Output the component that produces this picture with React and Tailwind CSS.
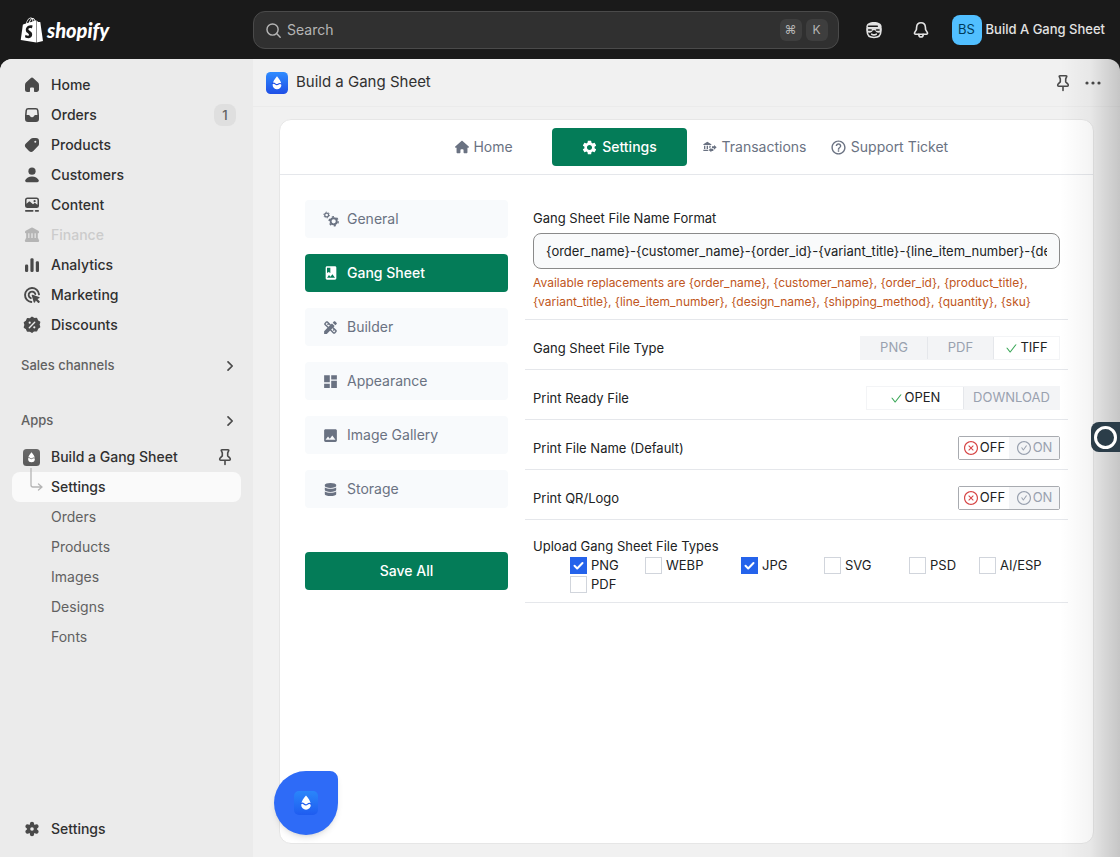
import React, { useState } from "react";
import { AiOutlineCheck, AiOutlineCheckCircle, AiOutlineCloseCircle } from "react-icons/ai";
import { FaDatabase, FaShopify } from "react-icons/fa";
import { FaHouse } from "react-icons/fa6";
import { MdDashboard, MdDesignServices, MdHelpOutline, MdImage, MdSettings } from "react-icons/md";

const Icon = ({ children, className = "size-5" }) => (
  <svg viewBox="0 0 20 20" fill="currentColor" className={`shrink-0 ${className}`} aria-hidden="true">
    {children}
  </svg>
);

const HomeIcon = () => (
  <Icon>
    <path d="M8.6 3.3a2 2 0 0 1 2.8 0l4.6 4.3c.6.6 1 1.4 1 2.3v4.6c0 1.4-1.1 2.5-2.5 2.5h-1.700a.8.8 0 0 1-.8-.8v-2.700a1 1 0 0 0-1-1h-2a1 1 0 0 0-1 1v2.700a.8.8 0 0 1-.8.8h-1.700A2.500 2.500 0 0 1 3 14.500V9.900c0-.9.400-1.700 1-2.300z" />
  </Icon>
);

const OrdersIcon = () => (
  <Icon>
    <path
      fillRule="evenodd"
      d="M6.200 3h7.600a2.700 2.700 0 0 1 2.700 2.300l.5 5v3.700a3 3 0 0 1-3 3H6a3 3 0 0 1-3-3v-3.700l.5-5A2.700 2.700 0 0 1 6.200 3zm.1 1.500c-.7 0-1.200.5-1.300 1.100L4.600 10h1.900c.7 0 1.200.4 1.500 1 .4.800 1.100 1.200 2 1.200s1.600-.4 2-1.200c.3-.6.8-1 1.500-1h1.900L15 5.600c-.1-.6-.6-1.100-1.300-1.100z"
    />
  </Icon>
);

const ProductsIcon = () => (
  <Icon>
    <path
      fillRule="evenodd"
      d="M11.300 3H14a3 3 0 0 1 3 3v2.900c0 .9-.3 1.600-.9 2.200l-4.800 4.900a3 3 0 0 1-4.300 0l-3.100-3.200a3 3 0 0 1 0-4.200l5-4.800A3.400 3.400 0 0 1 11.300 3zM13.300 7.700a1 1 0 1 0 0-2 1 1 0 0 0 0 2z"
    />
  </Icon>
);

const CustomersIcon = () => (
  <Icon>
    <circle cx="10" cy="6.200" r="3.600" />
    <path d="M10 11.400c3.200 0 5.600 1.500 6.700 3.700.5 1-.3 2.100-1.500 2.100H4.800c-1.200 0-2-1.100-1.500-2.100 1.100-2.200 3.500-3.700 6.700-3.700z" />
  </Icon>
);

const ContentIcon = () => (
  <Icon>
    <path
      fillRule="evenodd"
      d="M5.500 2.500h9A2.500 2.500 0 0 1 17 5v5.500a2.500 2.500 0 0 1-2.500 2.500h-9A2.500 2.500 0 0 1 3 10.500V5a2.500 2.500 0 0 1 2.500-2.500zM4.500 8.700l2-1.800c.6-.5 1.300-.5 1.900 0l2.600 2.300 1-.8c.5-.4 1.200-.4 1.700 0l1.800 1.300V5.200c0-.7-.5-1.200-1.200-1.200H5.700c-.7 0-1.200.5-1.200 1.200z"
    />
    <circle cx="12.600" cy="6.200" r="1.100" />
    <rect x="3" y="15" width="8.500" height="1.700" rx=".8" />
    <rect x="12.800" y="15" width="4.200" height="1.700" rx=".8" />
  </Icon>
);

const FinanceIcon = () => (
  <Icon>
    <path d="M9.200 2.700a1.700 1.700 0 0 1 1.600 0l5.500 3.100c.5.300.7.7.7 1.200v.3c0 .6-.4 1-1 1H4c-.6 0-1-.4-1-1V7c0-.5.300-.9.700-1.200z" />
    <path d="M4.200 8h2.100v5.500H4.200zM7.400 8h2v5.500h-2zM10.600 8h2v5.500h-2zM13.700 8h2.100v5.500h-2.100z" />
    <path d="M4 13h12l1 2.200v1c0 .5-.3.800-.8.800H3.800a.8.8 0 0 1-.8-.8v-1z" />
  </Icon>
);

const AnalyticsIcon = () => (
  <Icon>
    <rect x="3" y="9.500" width="3.200" height="7.500" rx="1.300" />
    <rect x="8.400" y="3.200" width="3.200" height="13.800" rx="1.300" />
    <rect x="13.800" y="6.200" width="3.200" height="10.800" rx="1.300" />
  </Icon>
);

const MarketingIcon = () => (
  <Icon>
    <g fill="none" stroke="currentColor" strokeWidth="1.900" strokeLinecap="round">
      <path d="M9.300 17A7 7 0 1 1 17 9.300" />
      <path d="M8.800 13.200A3.400 3.400 0 1 1 13.300 9" />
    </g>
    <path d="M9.700 10.600c-.2-.6.300-1.100.9-.9l6.500 2.200c.7.200.7 1.200 0 1.400l-1.700.7 2.200 2.200c.3.300.3.800 0 1.100l-.5.500c-.3.300-.8.300-1.100 0l-2.200-2.200-.7 1.700c-.3.700-1.200.6-1.400 0z" />
  </Icon>
);

const DiscountsIcon = () => (
  <Icon>
    <path
      d="M10 2.300l2.100 1.400 2.500-.2.900 2.300 2.100 1.400-.7 2.400.7 2.400-2.100 1.400-.9 2.300-2.500-.2L10 17.200l-2.100-1.400-2.500.2-.9-2.300L2.400 12.300l.7-2.400-.7-2.400 2.100-1.400.9-2.300 2.500.2z"
      stroke="currentColor"
      strokeWidth="1.400"
      strokeLinejoin="round"
    />
    <path d="M7.300 12.700l5.400-5.400" stroke="#ebebeb" strokeWidth="1.400" strokeLinecap="round" />
    <circle cx="7.700" cy="7.700" r="1.100" fill="#ebebeb" />
    <circle cx="12.300" cy="12.300" r="1.100" fill="#ebebeb" />
  </Icon>
);

const SettingsIcon = () => (
  <Icon>
    <g stroke="currentColor" strokeWidth="4.200" strokeLinecap="round">
      <path d="M10 4.800v10.400M5.500 7.400l9 5.200M14.500 7.400l-9 5.200" />
    </g>
    <circle cx="10" cy="10" r="5" />
    <circle cx="10" cy="10" r="1.800" fill="#ebebeb" />
  </Icon>
);

const PinIcon = () => (
  <Icon>
    <path
      d="M7 2.700h6c.6 0 .9.500.7 1l-1 2.200v3l2 1.900c.4.400.6.900.6 1.400 0 .6-.4 1-1 1H5.700c-.6 0-1-.4-1-1 0-.5.200-1 .6-1.400l2-1.900v-3l-1-2.200c-.2-.5.100-1 .7-1zM10 13.500v4"
      fill="none"
      stroke="currentColor"
      strokeWidth="1.600"
      strokeLinecap="round"
      strokeLinejoin="round"
    />
  </Icon>
);

const ChevronIcon = () => (
  <Icon>
    <path d="M8 6.800l4.200 4.200L8 15.200" fill="none" stroke="#4a4a4a" strokeWidth="1.700" strokeLinecap="round" strokeLinejoin="round" />
  </Icon>
);

const BellIcon = () => (
  <Icon>
    <g fill="none" stroke="currentColor" strokeWidth="1.600" strokeLinejoin="round" strokeLinecap="round">
      <path d="M10 2.800c-2.500 0-4.200 1.900-4.400 4.300l-.2 2.500-1.800 3c-.4.800.1 1.600.9 1.600h11c.8 0 1.300-.8.900-1.600l-1.800-3-.2-2.500C14.200 4.700 12.500 2.800 10 2.800z" />
      <path d="M7.800 14.400c0 1.600.9 2.600 2.200 2.600s2.200-1 2.200-2.600" />
    </g>
  </Icon>
);

const SidekickIcon = () => (
  <Icon>
    <path d="M2.400 8.700V6.500C2.600 3.500 5.700 2 10 2s7.400 1.500 7.600 4.500v2.200z" />
    <g fill="none" stroke="currentColor" strokeWidth="1.600" strokeLinecap="round">
      <path d="M3.200 9v2.500c0 3.700 2.700 6 6.800 6s6.800-2.300 6.800-6V9" />
      <path d="M7.700 14.200c1.400.8 3.200.8 4.600 0" />
    </g>
    <path d="M2.500 8.200h15v1.600c0 1.800-1.300 2.900-3 2.900-1.800 0-3-1-3.300-2.400H8.800c-.3 1.400-1.500 2.400-3.300 2.400-1.700 0-3-1.100-3-2.900z" />
    <path d="M4.500 6.200h8.800M4.600 9.900h2.600M12.500 9.900h2.600" stroke="#1a1a1a" strokeWidth="1.500" strokeLinecap="round" />
  </Icon>
);

const BankTransferIcon = () => (
  <svg viewBox="0 0 24 24" fill="currentColor" className="size-4" aria-hidden="true">
    <path d="M15 14V11H18V9L22 12.500L18 16V14H15M14 7.700V9H2V7.700L8 4L14 7.700M7 10H9V15H7V10M3 10H5V15H3V10M13 10V12.500L11 14.300V10H13M9.100 16L8.500 16.500L10.200 18H2V16H9.100M17 15V18H14V20L10 16.500L14 13V15H17Z" />
  </svg>
);

const GearsIcon = () => (
  <svg viewBox="0 0 24 24" fill="none" stroke="currentColor" className="size-4 shrink-0" aria-hidden="true">
    <circle cx="5.500" cy="6" r="2.900" strokeWidth="1.900" />
    <circle cx="5.500" cy="6" r="4.300" strokeWidth="1.500" strokeDasharray="1.900 2.600" />
    <circle cx="16" cy="15.500" r="4.600" strokeWidth="2.800" />
    <circle cx="16" cy="15.500" r="6.800" strokeWidth="2.200" strokeDasharray="3.200 3.920" />
  </svg>
);

const AlbumIcon = () => (
  <svg viewBox="0 0 24 24" fill="currentColor" className="size-4 shrink-0" aria-hidden="true">
    <path d="M18 2H6c-1.100 0-2 .9-2 2v16c0 1.100.9 2 2 2h12c1.100 0 2-.9 2-2V4c0-1.100-.9-2-2-2zM6 4h5v8l-2.500-1.500L6 12V4zm0 15l3-3.860 2.140 2.580 3-3.860L18 19H6z" />
  </svg>
);

// Drop with a wavy cut, used for every size of the app logo
const DropLogo = ({ className, from, to, id }) => (
  <svg viewBox="0 0 24 24" className={`shrink-0 ${className}`} aria-hidden="true">
    <defs>
      <linearGradient id={id} x1="0" y1="0" x2="0" y2="1">
        <stop stopColor={from} />
        <stop offset="1" stopColor={to} />
      </linearGradient>
    </defs>
    <rect width="24" height="24" rx="5" fill={`url(#${id})`} />
    <path d="M12 4.500c2.200 2.700 4.800 5.800 4.800 9.300a4.800 5 0 0 1-9.600 0c0-3.500 2.600-6.600 4.800-9.300z" fill="#fff" />
    <path d="M6.500 13c1.400-1.400 2.500-.9 3.500 0s2.600.9 3.600.1 2.600-.7 3.900.4" fill="none" stroke={to} strokeWidth="1.200" />
  </svg>
);

const mainLinks = [
  { label: "Home", icon: HomeIcon },
  { label: "Orders", icon: OrdersIcon, badge: 1 },
  { label: "Products", icon: ProductsIcon },
  { label: "Customers", icon: CustomersIcon },
  { label: "Content", icon: ContentIcon },
  { label: "Finance", icon: FinanceIcon, disabled: true },
  { label: "Analytics", icon: AnalyticsIcon },
  { label: "Marketing", icon: MarketingIcon },
  { label: "Discounts", icon: DiscountsIcon },
];

const appLinks = ["Settings", "Orders", "Products", "Images", "Designs", "Fonts"];

const tabs = [
  { label: "Home", icon: <FaHouse size={14} /> },
  { label: "Settings", icon: <MdSettings size={17} /> },
  { label: "Transactions", icon: <BankTransferIcon /> },
  { label: "Support Ticket", icon: <MdHelpOutline size={17} /> },
];

const sections = [
  { label: "General", icon: <GearsIcon /> },
  { label: "Gang Sheet", icon: <AlbumIcon /> },
  { label: "Builder", icon: <MdDesignServices size={17} /> },
  { label: "Appearance", icon: <MdDashboard size={17} /> },
  { label: "Image Gallery", icon: <MdImage size={17} /> },
  { label: "Storage", icon: <FaDatabase size={13} /> },
];

const uploadTypes = ["PNG", "WEBP", "JPG", "SVG", "PSD", "AI/ESP", "PDF"];

const Header = () => (
  <header className="flex h-[59px] shrink-0 items-center text-[#e3e3e3]">
    <a href="#" className="flex w-[253px] shrink-0 items-center gap-0.5 pl-[19px] text-white">
      <FaShopify size={26} />
      <span className="font-['Lato'] text-xl leading-6 font-black italic">shopify</span>
    </a>
    <label className="flex h-[38px] flex-1 items-center rounded-xl border border-[#4a4a4a] bg-[#303030] px-2.5">
      <Icon className="size-[18px] text-[#b5b5b5]">
        <g fill="none" stroke="currentColor" strokeWidth="1.600" strokeLinecap="round">
          <circle cx="9.500" cy="9.500" r="6.200" />
          <path d="M14 14l4 4" />
        </g>
      </Icon>
      <input
        type="text"
        aria-label="Search"
        placeholder="Search"
        className="ml-[5px] min-w-0 flex-1 bg-transparent text-sm outline-none placeholder:text-[#b5b5b5]"
      />
      <kbd className="mr-1 flex size-[22px] items-center justify-center rounded-md bg-[#3e3e3e] font-['Inter',sans-serif] text-xs text-[#b5b5b5]">⌘</kbd>
      <kbd className="flex size-[22px] items-center justify-center rounded-md bg-[#3e3e3e] font-['Inter',sans-serif] text-xs text-[#b5b5b5]">K</kbd>
    </label>
    <div className="flex shrink-0 items-center pr-[15px] pl-[25px]">
      <button aria-label="Sidekick">
        <SidekickIcon />
      </button>
      <button aria-label="Notifications" className="ml-[27px]">
        <BellIcon />
      </button>
      <button className="ml-[21px] flex items-center gap-1 text-[13px] font-medium">
        <span className="flex size-[30px] items-center justify-center rounded-lg bg-[#51bfff] font-normal text-[#003a5a]">BS</span>
        Build A Gang Sheet
      </button>
    </div>
  </header>
);

const Sidebar = () => (
  <nav className="flex w-[253px] shrink-0 flex-col bg-[#ebebeb] px-3 pt-[11px] pb-[13px] text-sm font-medium text-[#303030]">
    {mainLinks.map(({ label, icon: LinkIcon, badge, disabled }) => (
      <a
        key={label}
        href="#"
        className={`flex h-[30px] items-center gap-[9px] px-2.5 ${disabled ? "text-[#cccccc]" : ""}`}
      >
        <span className={disabled ? "text-[#b5b5b5]" : "text-[#4a4a4a]"}>
          <LinkIcon />
        </span>
        {label}
        {badge && (
          <span className="-mr-[5px] ml-auto flex size-[22px] items-center justify-center rounded-lg bg-[#dfdfdf] text-[13px] text-[#616161]">
            {badge}
          </span>
        )}
      </a>
    ))}

    <button className="mt-2.5 flex h-[30px] items-center justify-between pr-[1px] pl-[9px] text-[13px] text-[#616161]">
      Sales channels
      <ChevronIcon />
    </button>
    <button className="mt-[25px] flex h-[30px] items-center justify-between pr-[1px] pl-[9px] text-[13px] text-[#616161]">
      Apps
      <ChevronIcon />
    </button>

    <div className="mt-[7px] flex h-[30px] items-center pr-1.5 pl-[11px]">
      <DropLogo id="logo-side" from="#6a6a6a" to="#5a5a5a" className="mr-[11px] size-[17px]" />
      <a href="#" className="flex-1">
        Build a Gang Sheet
      </a>
      <button aria-label="Unpin app" className="text-[#4a4a4a]">
        <PinIcon />
      </button>
    </div>
    {appLinks.map((label, index) => (
      <a
        key={label}
        href="#"
        className={`relative flex h-[30px] items-center pl-[39px] ${
          index === 0 ? "rounded-lg bg-[#fafafa]" : "font-normal text-[#616161]"
        }`}
      >
        {index === 0 && (
          <svg viewBox="0 0 14 24" className="absolute -top-1 left-[18px] h-6 w-3.5" fill="none" stroke="#b5b5b5" strokeWidth="1.300" aria-hidden="true">
            <path d="M1 0v17c0 1.300.7 2 2 2h8M8.500 16l3.500 3-3.500 3" strokeLinecap="round" strokeLinejoin="round" />
          </svg>
        )}
        {label}
      </a>
    ))}

    <a href="#" className="mt-auto flex h-[30px] items-center gap-[9px] px-2.5">
      <span className="text-[#4a4a4a]">
        <SettingsIcon />
      </span>
      Settings
    </a>
  </nav>
);

const SettingRow = ({ label, children }) => (
  <div className="flex items-end justify-between border-b border-gray-200 px-2 pt-4 pb-[9px]">
    <span className="leading-6">{label}</span>
    {children}
  </div>
);

const Segment = ({ options, value, onChange, label, width }) => (
  <div role="group" aria-label={label} className="flex border border-gray-100">
    {options.map((option, index) => (
      <button
        key={option}
        onClick={() => onChange(option)}
        aria-pressed={value === option}
        className={`flex h-[22px] items-center justify-center gap-0.5 ${width} ${
          index > 0 ? "border-l border-gray-200" : ""
        } ${value === option ? "bg-white" : "bg-gray-100 text-gray-400"}`}
      >
        {value === option && <AiOutlineCheck size={13} className="text-[#3aa757]" />}
        {option}
      </button>
    ))}
  </div>
);

const Toggle = ({ value, onChange, label }) => (
  <div role="group" aria-label={label} className="flex rounded-xs border border-[#a8abb0]">
    <button
      onClick={() => onChange(false)}
      aria-pressed={!value}
      className={`flex h-[22px] w-[50px] items-center justify-center gap-px ${
        value ? "bg-gray-100 text-gray-400" : "bg-white"
      }`}
    >
      <AiOutlineCloseCircle size={16} className={value ? "" : "text-[#d64545]"} />
      OFF
    </button>
    <button
      onClick={() => onChange(true)}
      aria-pressed={value}
      className={`flex h-[22px] w-[50px] items-center justify-center gap-px ${
        value ? "bg-white" : "bg-gray-100 text-gray-400"
      }`}
    >
      <AiOutlineCheckCircle size={16} className={value ? "text-[#3aa757]" : ""} />
      ON
    </button>
  </div>
);

const GangSheetSettings = () => {
  const [fileName, setFileName] = useState(
    "{order_name}-{customer_name}-{order_id}-{variant_title}-{line_item_number}-{design_name}"
  );
  const [fileType, setFileType] = useState("TIFF");
  const [readyFile, setReadyFile] = useState("OPEN");
  const [printName, setPrintName] = useState(false);
  const [printQr, setPrintQr] = useState(false);
  const [uploads, setUploads] = useState(["PNG", "JPG"]);

  const toggleUpload = (type) => {
    setUploads(uploads.includes(type) ? uploads.filter((t) => t !== type) : [...uploads, type]);
  };

  return (
    <div className="min-w-0 flex-1 text-[13px] text-[#202223]">
      <div className="border-b border-gray-200 px-2 pt-2 pb-2">
        <label htmlFor="file-name" className="mb-[5px] block leading-5">
          Gang Sheet File Name Format
        </label>
        <input
          id="file-name"
          type="text"
          value={fileName}
          onChange={(e) => setFileName(e.target.value)}
          className="h-9 w-full rounded-lg border border-[#8a8a8a] bg-gray-50 px-3"
        />
        <p className="mt-1 text-xs leading-[19px] text-[#c05621]">
          Available replacements are {"{order_name}, {customer_name}, {order_id}, {product_title}, {variant_title}, {line_item_number}, {design_name}, {shipping_method}, {quantity}, {sku}"}
        </p>
      </div>

      <SettingRow label="Gang Sheet File Type">
        <Segment
          label="Gang Sheet File Type"
          options={["PNG", "PDF", "TIFF"]}
          value={fileType}
          onChange={setFileType}
          width="w-[66px]"
        />
      </SettingRow>
      <SettingRow label="Print Ready File">
        <Segment
          label="Print Ready File"
          options={["OPEN", "DOWNLOAD"]}
          value={readyFile}
          onChange={setReadyFile}
          width="w-24"
        />
      </SettingRow>
      <SettingRow label="Print File Name (Default)">
        <Toggle label="Print File Name" value={printName} onChange={setPrintName} />
      </SettingRow>
      <SettingRow label="Print QR/Logo">
        <Toggle label="Print QR/Logo" value={printQr} onChange={setPrintQr} />
      </SettingRow>

      <fieldset className="border-b border-gray-200 px-2 pt-4 pb-2">
        <legend className="float-left w-full leading-5">Upload Gang Sheet File Types</legend>
        <div className="clear-both grid grid-cols-[75fr_96fr_83fr_85fr_70fr_81fr] pl-[37px]">
          {uploadTypes.map((type) => (
            <label key={type} className="flex h-[19px] items-center gap-1">
              <span className="relative flex size-[17px]">
                <input
                  type="checkbox"
                  checked={uploads.includes(type)}
                  onChange={() => toggleUpload(type)}
                  className="size-[17px] appearance-none border border-gray-300 bg-white checked:border-[#2563eb] checked:bg-[#2563eb]"
                />
                {uploads.includes(type) && (
                  <svg viewBox="0 0 17 17" className="pointer-events-none absolute inset-0" fill="none" stroke="#fff" strokeWidth="2" aria-hidden="true">
                    <path d="M4.500 8.800l2.700 2.700 5.300-5.500" strokeLinecap="round" strokeLinejoin="round" />
                  </svg>
                )}
              </span>
              {type}
            </label>
          ))}
        </div>
      </fieldset>
    </div>
  );
};

const App = () => {
  const [tab, setTab] = useState("Settings");
  const [section, setSection] = useState("Gang Sheet");

  return (
    <div className="flex min-h-screen flex-col bg-[#1a1a1a] font-['Inter',sans-serif]">
      <Header />
      <div className="relative flex flex-1 overflow-hidden rounded-t-xl bg-[#f1f1f1]">
        <Sidebar />
        <main className="flex min-w-0 flex-1 flex-col">
          <div className="flex h-12 items-center border-b border-[#ebebeb] pr-[17px] pl-[13px] text-[#303030]">
            <DropLogo id="logo-title" from="#2f8cff" to="#1f4fe6" className="size-[22px]" />
            <h1 className="ml-2 flex-1 text-[15px]">Build a Gang Sheet</h1>
            <button aria-label="Pin" className="text-[#4a4a4a]">
              <PinIcon />
            </button>
            <button aria-label="More actions" className="ml-2.5 text-[#4a4a4a]">
              <Icon>
                <circle cx="4" cy="10" r="1.600" />
                <circle cx="10" cy="10" r="1.600" />
                <circle cx="16" cy="10" r="1.600" />
              </Icon>
            </button>
          </div>

          <div className="mx-[26px] mt-3 mb-[13px] flex-1 rounded-xl border border-[#e6e6e6] bg-white">
            <div className="flex justify-center border-b border-gray-200 py-2 text-sm">
              {tabs.map(({ label, icon }) => (
                <button
                  key={label}
                  onClick={() => setTab(label)}
                  className={`flex h-[38px] w-[135px] items-center justify-center gap-1 rounded ${
                    tab === label ? "bg-[#047c58] font-medium text-white" : "text-gray-500"
                  }`}
                >
                  {icon}
                  {label}
                </button>
              ))}
            </div>

            <div className="flex gap-[17px] p-[25px]">
              <div className="flex w-[203px] shrink-0 flex-col gap-4 text-sm">
                {sections.map(({ label, icon }) => (
                  <button
                    key={label}
                    onClick={() => setSection(label)}
                    className={`flex h-[38px] items-center rounded px-[17px] ${
                      section === label ? "bg-[#047c58] font-medium text-white" : "bg-[#f8fafc] text-gray-500"
                    }`}
                  >
                    <span className="mr-2 flex w-[17px] justify-center">{icon}</span>
                    {label}
                  </button>
                ))}
                <button className="mt-7 h-[38px] rounded bg-[#047c58] font-medium text-white">Save All</button>
              </div>
              <GangSheetSettings />
            </div>
          </div>
        </main>

        <div className="pointer-events-none absolute inset-y-0 right-0 w-[60px] bg-linear-to-l from-black/18 via-black/4 to-transparent" />
        <button
          aria-label="Open recorder"
          className="absolute top-[363px] right-0 flex h-[30px] w-[29px] items-center justify-center rounded-l-lg bg-[#2b3d49]"
        >
          <span className="size-[23px] rounded-full border-3 border-white" />
        </button>
      </div>

      <button
        aria-label="Open app chat"
        className="fixed bottom-[22px] left-[274px] flex size-16 items-center justify-center rounded-[32px] rounded-tr-lg bg-[#2e6bf7] shadow-md"
      >
        <DropLogo id="logo-chat" from="#2a86fa" to="#1f5cf0" className="size-6" />
      </button>
    </div>
  );
};

export default App;
